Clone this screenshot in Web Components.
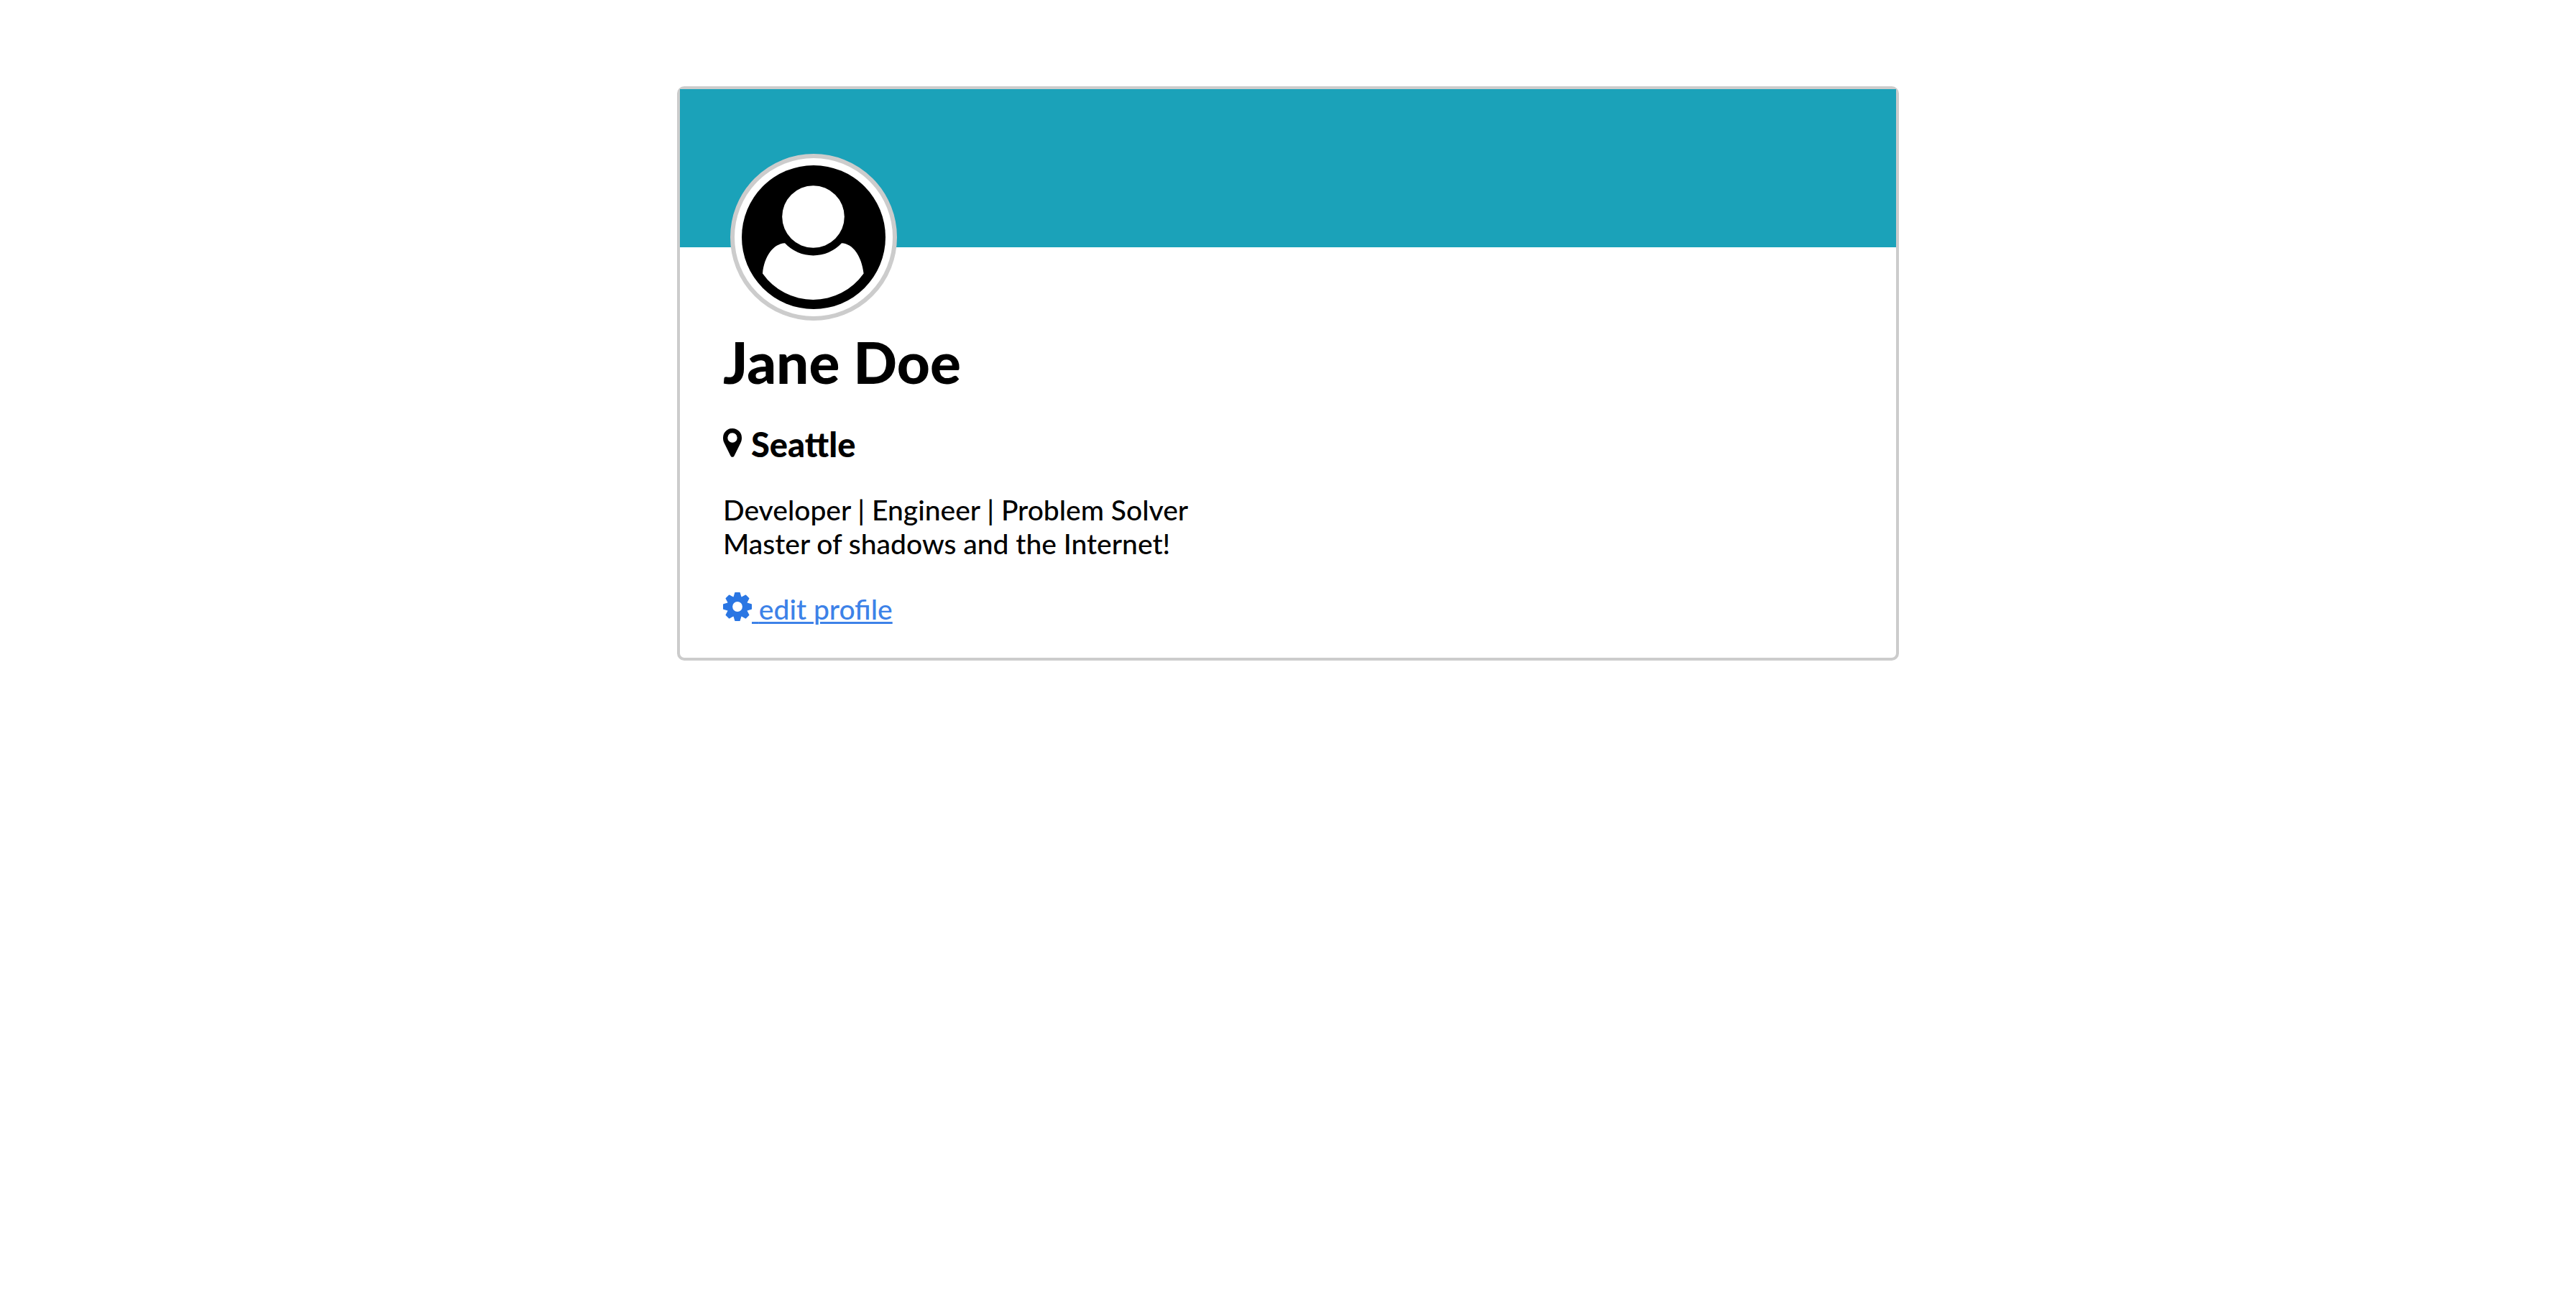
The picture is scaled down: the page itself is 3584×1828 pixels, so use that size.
<!DOCTYPE html>
<html lang="en">
<head>
<meta charset="utf-8">
<title>User profile</title>
<style>
  body { margin: 0; background: #fff; color: #000; font: 500 39px/47px Lato, sans-serif; }
  main { padding: 120px 24px; }
</style>
</head>
<body>
<main>
  <profile-card>
    <user-avatar slot="avatar"></user-avatar>
    <span slot="name">Jane Doe</span>
    <span slot="city">Seattle</span>
    <span slot="bio">Developer | Engineer | Problem Solver<br>Master of shadows and the Internet!</span>
    <edit-link slot="action" href="#edit">edit profile</edit-link>
  </profile-card>
</main>

<template id="card-template">
  <style>
    :host { display: block; box-sizing: border-box; max-width: 1700px; margin: 0 auto; border: 4px solid #ccc; border-radius: 10px; }
    .banner { height: 220px; background: #1ba2b9; }
    .body { display: flex; flex-direction: column; align-items: flex-start; gap: 40px; padding: 0 60px 44px; }
    header { display: flex; flex-direction: column; align-items: flex-start; gap: 10px; margin-top: -130px; }
    ::slotted(user-avatar) { margin-left: 10px; }
    h1, h2, p { margin: 0; }
    h1 { font-size: 80px; line-height: 94px; font-weight: 900; }
    h2 { display: flex; gap: 13px; font-size: 47px; line-height: 56px; font-weight: 900; }
    p { padding-bottom: 4px; }
  </style>
  <div class="banner"></div>
  <div class="body">
    <header>
      <slot name="avatar"></slot>
      <h1><slot name="name"></slot></h1>
    </header>
    <h2><map-pin></map-pin><slot name="city"></slot></h2>
    <p><slot name="bio"></slot></p>
    <slot name="action"></slot>
  </div>
</template>

<template id="avatar-template">
  <style>
    :host { display: block; box-sizing: border-box; width: 232px; height: 232px; padding: 10px; border: 6px solid #ccc; border-radius: 50%; background: #fff; }
    svg { display: block; width: 100%; height: 100%; }
  </style>
  <svg viewBox="0 0 200 200" role="img" aria-label="Profile picture">
    <circle cx="100" cy="100" r="100"/>
    <circle cx="99.5" cy="71.5" r="43.3" fill="#fff"/>
    <path d="M60 108.3A54 54 0 0 0 139 108.3C155 109 167 127 169.6 150.5A86 86 0 0 1 29 150.5C31 127 44 109 60 108.3Z" fill="#fff"/>
  </svg>
</template>

<template id="pin-template">
  <style>
    :host { display: flex; padding-top: 6px; }
    svg { display: block; width: 26px; height: 40px; }
  </style>
  <svg viewBox="0 0 26 40" aria-hidden="true">
    <path fill-rule="evenodd" d="M13 0A13 13 0 0 1 26 13C26 16 25.400 18 24.500 20L15.500 38.300C14.500 40.300 11.500 40.300 10.500 38.300L1.500 20C0.600 18 0 16 0 13A13 13 0 0 1 13 0ZM13 6.300A6.700 6.700 0 1 0 13 19.700A6.700 6.700 0 1 0 13 6.300Z"/>
  </svg>
</template>

<template id="link-template">
  <style>
    :host { display: block; }
    a { display: flex; color: #3d82e8; text-decoration: none; }
    svg { display: block; width: 40px; height: 40px; fill: #2a76e3; }
    span { white-space: pre; text-decoration: underline; text-decoration-thickness: 3px; text-underline-offset: 3px; }
  </style>
  <a><svg viewBox="0 0 40 40" aria-hidden="true"><defs>
      <path id="tooth" d="M14 8L16.300 0.500Q16.500 0 17 0H23Q23.500 0 23.700 0.500L26 8Z"/>
      <mask id="hub"><rect width="40" height="40" fill="#fff"/><circle cx="20" cy="20" r="6.900" fill="#000"/></mask></defs>
      <g mask="url(#hub)"><circle cx="20" cy="20" r="14.300"/>
      <use href="#tooth"/><use href="#tooth" transform="rotate(90 20 20)"/><use href="#tooth" transform="rotate(180 20 20)"/><use href="#tooth" transform="rotate(270 20 20)"/>
      <use href="#tooth" transform="rotate(45 20 20)"/><use href="#tooth" transform="rotate(135 20 20)"/><use href="#tooth" transform="rotate(225 20 20)"/><use href="#tooth" transform="rotate(315 20 20)"/></g>
    </svg><span> <slot></slot></span></a>
</template>

<script>
  class TemplateElement extends HTMLElement {
    constructor() {
      super();
      const template = document.getElementById(this.constructor.template);
      this.attachShadow({ mode: "open" }).append(template.content.cloneNode(true));
    }
  }
  class UserAvatar extends TemplateElement { static template = "avatar-template"; }
  class MapPin extends TemplateElement { static template = "pin-template"; }
  class EditLink extends TemplateElement {
    static template = "link-template";
    connectedCallback() {
      this.shadowRoot.querySelector("a").href = this.getAttribute("href") || "#";
    }
  }
  class ProfileCard extends TemplateElement { static template = "card-template"; }
  customElements.define("user-avatar", UserAvatar);
  customElements.define("map-pin", MapPin);
  customElements.define("edit-link", EditLink);
  customElements.define("profile-card", ProfileCard);
</script>
</body>
</html>
